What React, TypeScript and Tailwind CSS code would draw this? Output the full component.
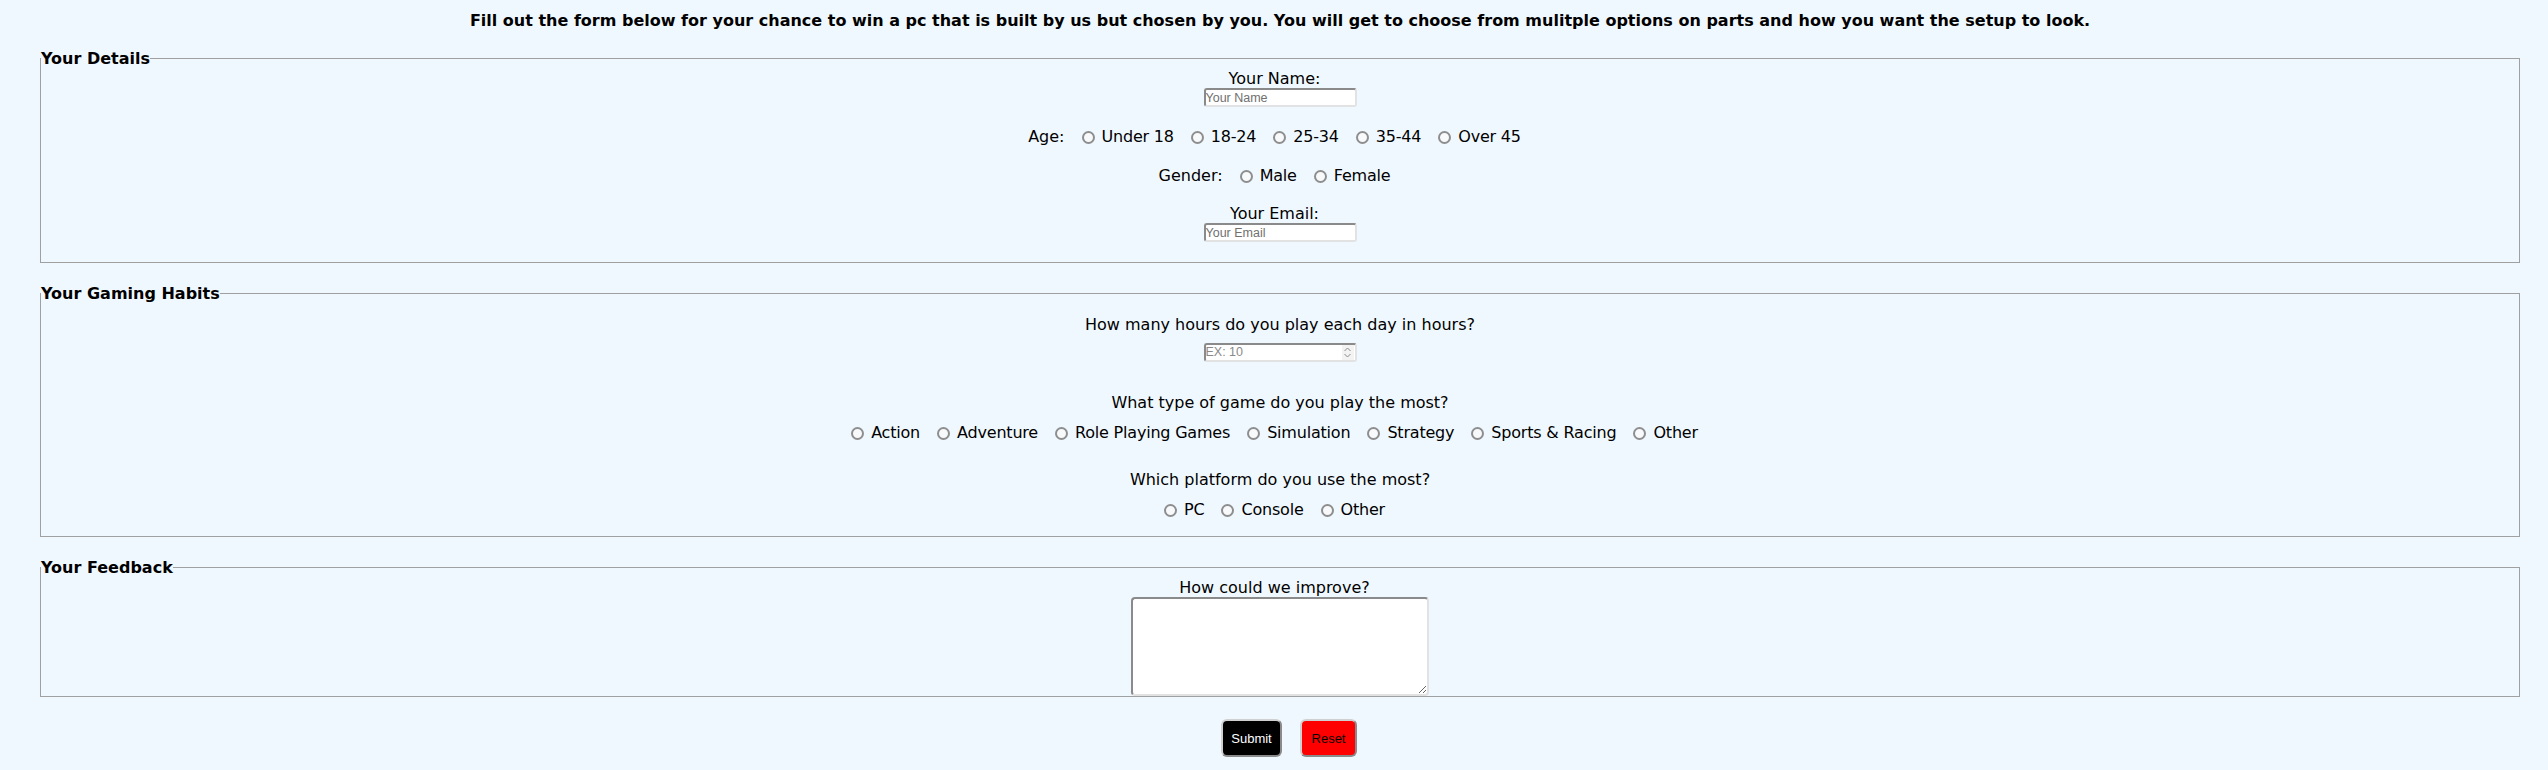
import React from "react";

function Radio({ name }: { name: string }) {
  return (
    <input
      type="radio"
      name={name}
      className="appearance-none m-0 w-[13px] h-[13px] shrink-0 rounded-full border-2 border-[#8e8e8e] bg-[#f7f9fb] translate-y-[1px]"
    />
  );
}

function RadioRow({ name, options, label }: { name: string; options: string[]; label?: string }) {
  return (
    <div className="flex items-center justify-center gap-[17px] h-[19px] pr-[11px]">
      {label && <span>{label}</span>}
      {options.map((opt) => (
        <label key={opt} className="flex items-center gap-[7px]">
          <Radio name={name} />
          <span className="tracking-[-0.2px]">{opt}</span>
        </label>
      ))}
    </div>
  );
}

const inputBox =
  "w-[153px] h-[19px] bg-white rounded-[3px] border-2 border-t-[#8a8a8a] border-l-[#8a8a8a] border-r-[#e2e2e2] border-b-[#e2e2e2]";

function TextInput({ placeholder }: { placeholder: string }) {
  return (
    <input
      type="text"
      placeholder={placeholder}
      className={`${inputBox} px-0 text-[12.5px] leading-[15px] font-['Liberation_Sans',sans-serif] outline-none placeholder:text-[#707070]`}
    />
  );
}

function Legend({ children }: { children: React.ReactNode }) {
  return <legend className="text-[16px] leading-[19px] font-bold">{children}</legend>;
}

export default function App() {
  const games = ["Action", "Adventure", "Role Playing Games", "Simulation", "Strategy", "Sports & Racing", "Other"];

  return (
    <div className="min-h-[770px] bg-[#f0f8ff] text-black font-['DejaVu_Sans',sans-serif] text-[16px] leading-[19px] pt-[12px]">
      <form className="ml-[40px] w-[2480px]">
        <h1 className="text-center font-bold text-[16px] leading-[18px]">
          Fill out the form below for your chance to win a pc that is built by us but chosen by you. You will get to
          choose from mulitple options on parts and how you want the setup to look.
        </h1>

        <fieldset className="mt-[19px] border border-[#a0a0a0]">
          <Legend>Your Details</Legend>
          <div className="flex flex-col items-center pb-[20px]">
            <label className="mt-[1px] pr-[11px]">Your Name:</label>
            <TextInput placeholder="Your Name" />
            <div className="mt-[20px]">
              <RadioRow name="age" label="Age:" options={["Under 18", "18-24", "25-34", "35-44", "Over 45"]} />
            </div>
            <div className="mt-[20px]">
              <RadioRow name="gender" label="Gender:" options={["Male", "Female"]} />
            </div>
            <label className="mt-[19px] pr-[11px]">Your Email:</label>
            <TextInput placeholder="Your Email" />
          </div>
        </fieldset>

        <fieldset className="mt-[21px] border border-[#a0a0a0]">
          <Legend>Your Gaming Habits</Legend>
          <div className="flex flex-col items-center pb-[17px]">
            <p className="mt-[12px]">How many hours do you play each day in hours?</p>
            <div className={`${inputBox} mt-[9px] flex items-center`}>
              <input
                type="text"
                placeholder="EX: 10"
                className="flex-1 min-w-0 bg-transparent outline-none text-[12.5px] leading-[15px] font-['Liberation_Sans',sans-serif] placeholder:text-[#8a8a8a]"
              />
              <span className="flex flex-col items-center justify-center w-[12px] h-[15px] mr-[1px] bg-[#f3f3f3]">
                <svg width="7" height="5" viewBox="0 0 7 5" fill="none" stroke="#8a8a8a" strokeWidth="1">
                  <path d="M0.5 4 L3.5 1 L6.5 4" />
                </svg>
                <svg width="7" height="5" viewBox="0 0 7 5" fill="none" stroke="#8a8a8a" strokeWidth="1" className="mt-[1px]">
                  <path d="M0.5 1 L3.5 4 L6.5 1" />
                </svg>
              </span>
            </div>
            <p className="mt-[31px]">What type of game do you play the most?</p>
            <div className="mt-[11px]">
              <RadioRow name="game" options={games} />
            </div>
            <p className="mt-[28px]">Which platform do you use the most?</p>
            <div className="mt-[11px]">
              <RadioRow name="platform" options={["PC", "Console", "Other"]} />
            </div>
          </div>
        </fieldset>

        <fieldset className="mt-[21px] border border-[#a0a0a0]">
          <Legend>Your Feedback</Legend>
          <div className="flex flex-col items-center">
            <label className="mt-[1px] pr-[11px]">How could we improve?</label>
            <textarea className="block w-[298px] h-[99px] bg-white rounded-[4px] border-2 border-t-[#8a8a8a] border-l-[#8a8a8a] border-r-[#e2e2e2] border-b-[#e2e2e2] outline-none" />
          </div>
        </fieldset>

        <div className="mt-[22px] flex justify-center gap-[18px] pl-[18px] font-['Liberation_Sans',sans-serif] text-[13px]">
          <button
            type="submit"
            className="w-[61px] h-[38px] rounded-[6px] bg-black text-white border-2 border-t-[#d0d0d0] border-l-[#d0d0d0] border-r-[#8a8a8a] border-b-[#8a8a8a]"
          >
            Submit
          </button>
          <button
            type="reset"
            className="w-[57px] h-[38px] rounded-[6px] bg-[#ff0000] text-black border-2 border-t-[#d0d0d0] border-l-[#d0d0d0] border-r-[#8a8a8a] border-b-[#8a8a8a]"
          >
            Reset
          </button>
        </div>
      </form>
    </div>
  );
}
